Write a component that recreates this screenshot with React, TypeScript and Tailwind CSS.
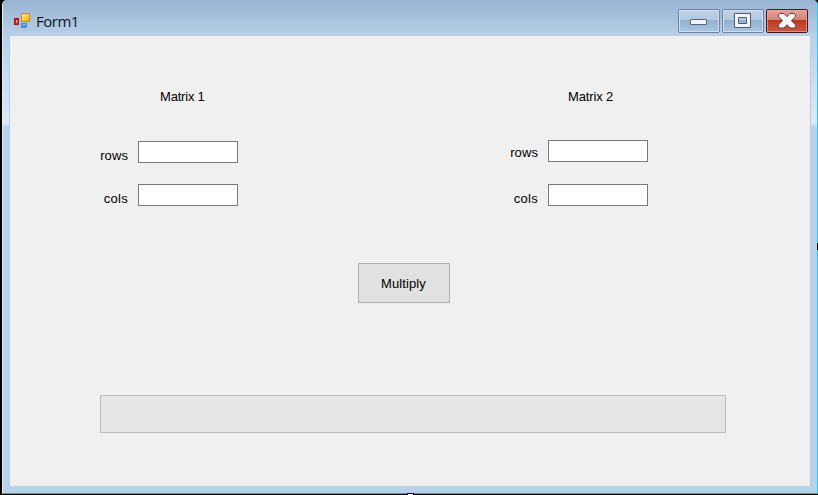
import { useState, type ReactNode } from "react";

function FormIcon() {
  return (
    <svg width="18" height="18" viewBox="0 0 18 18" aria-hidden="true">
      <defs>
        <linearGradient id="gold" x1="0" y1="0" x2="1" y2="1">
          <stop offset="0" stopColor="#fff3a2" />
          <stop offset="0.5" stopColor="#f8d044" />
          <stop offset="1" stopColor="#e5ab1c" />
        </linearGradient>
        <linearGradient id="azure" x1="0" y1="0" x2="0" y2="1">
          <stop offset="0" stopColor="#8fbcf8" />
          <stop offset="1" stopColor="#3a78d8" />
        </linearGradient>
      </defs>
      <path d="M0.5 5.5v-5h17v17h-17v-4" fill="none" stroke="#bcb9bc" strokeOpacity="0.7" strokeDasharray="2 1" />
      <rect x="1.5" y="6.5" width="4" height="6" fill="#c91d14" stroke="#a61610" />
      <rect x="3" y="8" width="1.5" height="3" fill="#f1a095" />
      <rect x="8.5" y="1.5" width="8" height="8" fill="url(#gold)" stroke="#c58f16" />
      <rect x="8.5" y="11.5" width="5" height="4" fill="url(#azure)" stroke="#4d86dc" />
    </svg>
  );
}

function CaptionButton({ label, danger, children }: { label: string; danger?: boolean; children: ReactNode }) {
  const tone = danger
    ? "border-[#52151f] bg-linear-to-b from-[#dfa59b] from-0% via-[#cf8074] via-48% to-[#c9553c]"
    : "border-[#6d83a2] bg-linear-to-b from-[#bdd1e7] to-[#a7c1dd]";
  const lower = danger
    ? "bg-linear-to-b from-[#b9351c] to-[#cb5a40]"
    : "bg-linear-to-b from-[#91afd0] to-[#aac6e2]";
  const rim = danger ? "border-[#e5a99d]/70" : "border-[#cfdeed]";
  return (
    <button aria-label={label} className={`grid h-6 w-[42px] overflow-hidden rounded-[2px] border ${tone}`}>
      <span className={`col-start-1 row-start-1 mt-[10px] h-3 ${lower}`} />
      <span className={`col-start-1 row-start-1 flex h-[22px] justify-center border ${rim}`}>{children}</span>
    </button>
  );
}

function TitleBar() {
  return (
    <header className="flex h-9 shrink-0 items-start bg-linear-to-b from-[#98b3d2] to-[#b8d0e9] pl-[10px] pr-[9px]">
      <div className="mt-3">
        <FormIcon />
      </div>
      <h1 className="ml-[5px] mt-[12px] font-['Open_Sans','Noto_Sans',sans-serif] text-[15px] leading-[19px] tracking-[-0.5px] text-[#10151c]">
        Form1
      </h1>
      <div className="ml-auto mt-[9px] flex gap-[2px]">
        <CaptionButton label="Minimize">
          <svg className="mt-2" width="18" height="7" viewBox="0 0 18 7">
            <rect x="0.5" y="0.5" width="16" height="5" rx="0.5" fill="#f4f4f4" stroke="#5c6475" />
          </svg>
        </CaptionButton>
        <CaptionButton label="Maximize">
          <svg className="mt-[2px]" width="18" height="16" viewBox="0 0 18 16">
            <path d="M0.5 0.5h16v14h-16zM4.5 4.5v6h8v-6z" fill="#f4f4f4" fillRule="evenodd" stroke="#535d70" />
          </svg>
        </CaptionButton>
        <CaptionButton label="Close" danger>
          <svg className="mt-[2px]" width="18" height="16" viewBox="0 0 18 16">
            <path
              d="M0.5 2 2 0.5h4L9 3.7 12 0.5h4L17.5 2v1.8L13.4 7.7l4.1 4v1.8L16 15h-4L9 11.7 6 15H2L0.5 13.5v-1.8l4.1-4L0.5 3.8z"
              fill="#f5f5f5"
              stroke="#5a4553"
              strokeLinejoin="round"
            />
          </svg>
        </CaptionButton>
      </div>
    </header>
  );
}

function Field({ label, className, labelClass }: { label: string; className: string; labelClass: string }) {
  const [value, setValue] = useState("");
  return (
    <label className={`flex h-[22px] items-start ${className}`}>
      <span className={`flex w-[28px] justify-end leading-4 ${labelClass}`}>{label}</span>
      <input
        value={value}
        onChange={(e) => setValue(e.target.value)}
        className="ml-[10px] h-[22px] w-[100px] border border-[#7a7a7a] bg-white px-1 outline-none"
      />
    </label>
  );
}

export default function App() {
  return (
    <div className="relative flex h-[495px] w-[818px] overflow-hidden bg-black font-['Liberation_Sans',Arial,sans-serif] text-[13px] text-black">
      <main className="ml-[2px] flex h-[494px] w-[816px] flex-col overflow-hidden rounded-t-[5px] border-b border-l border-r border-b-[#23a9c7] border-l-[#e4edf7] border-r-[#35c3e3] bg-[#b9d1ea]">
        <TitleBar />
        <div className="flex h-[450px]">
          <div className="w-[7px] border-r border-[#b5cce5] bg-linear-to-b from-[#b8d0e9] from-0% via-[#dce9f8] via-[87px] to-[#b9d1ea] to-[91px]" />
          <div className="h-[450px] w-[800px] bg-[#f0f0f0]">
            <div className="flex h-[227px]">
              <section className="w-[410px]">
                <h2 className="ml-[150px] mt-[53px] leading-4 tracking-[-0.2px]">Matrix 1</h2>
                <Field label="rows" className="ml-[90px] mt-[36px]" labelClass="mt-[7px] tracking-[0.1px]" />
                <Field label="cols" className="ml-[90px] mt-[21px]" labelClass="mt-[7px] tracking-[0.3px]" />
              </section>
              <section className="w-[390px]">
                <h2 className="ml-[148px] mt-[53px] leading-4 tracking-[-0.15px]">Matrix 2</h2>
                <Field label="rows" className="ml-[90px] mt-[35px]" labelClass="mt-[5px] tracking-[0.1px]" />
                <Field label="cols" className="ml-[90px] mt-[22px]" labelClass="mt-[7px] tracking-[0.3px]" />
              </section>
            </div>
            <button className="ml-[348px] block h-10 w-[92px] border border-[#adadad] bg-[#e1e1e1] pr-px pt-[2px] tracking-[0.1px]">
              Multiply
            </button>
            <div className="ml-[90px] mt-[92px] h-[38px] w-[626px] border border-[#bcbcbc] bg-[#e6e6e6]" />
          </div>
          <div className="w-[7px] border-l border-[#b5cce5] bg-linear-to-b from-[#b8d0e9] from-0% via-[#dce9f8] via-[87px] to-[#b9d1ea] to-[91px]" />
        </div>
      </main>
      <span className="absolute right-0 top-[243px] h-[7px] w-px bg-black" />
      <span className="absolute left-[407px] top-[493px] h-[2px] w-[7px] border-x border-t border-black bg-white" />
    </div>
  );
}
